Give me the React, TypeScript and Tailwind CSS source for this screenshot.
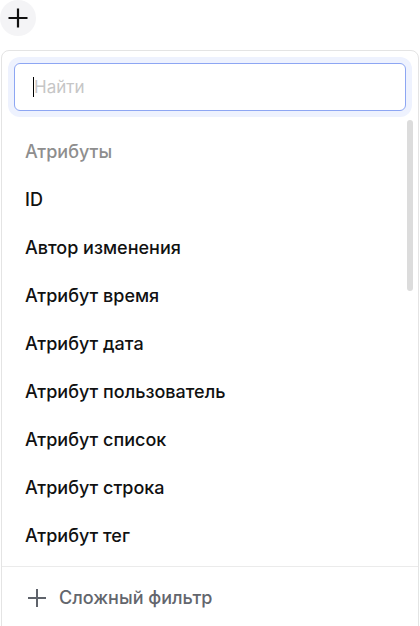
import React from "react";

const items = [
  "ID",
  "Автор изменения",
  "Атрибут время",
  "Атрибут дата",
  "Атрибут пользователь",
  "Атрибут список",
  "Атрибут строка",
  "Атрибут тег",
];

export default function App() {
  return (
    <div
      className="w-[420px] h-[626px] overflow-hidden bg-white"
      style={{ fontFamily: "Inter, 'Noto Sans', sans-serif" }}
    >
      <button className="w-9 h-9 rounded-full bg-[#f4f4f6] flex items-center justify-center">
        <svg width="20" height="20" viewBox="0 0 20 20" fill="none" stroke="#111" strokeWidth="2.2" strokeLinecap="butt">
          <path d="M10 0.5V19.5M0.5 10H19.5" />
        </svg>
      </button>
      <div className="mt-[14px] ml-px w-[418px] h-[600px] border border-[#e4e4e4] rounded-lg flex flex-col relative">
        <div className="pt-3 px-3 pb-[6px]">
          <div className="relative h-12 rounded-md border border-[#8da6f3] shadow-[0_0_0_6px_#eef2fe] bg-white flex items-center">
            <span className="absolute left-[18px] top-[13px] w-px h-5 bg-black" />
            <input
              className="w-full h-full bg-transparent outline-none pl-[19px] text-[17px] placeholder:text-[#c6c6c6] text-[#111]"
              placeholder="Найти"
            />
          </div>
        </div>
        <div className="relative h-[449px] overflow-hidden">
          <div className="pt-[10px]">
            <div className="h-12 flex items-center pl-[23px] text-[18px] font-medium text-[#8e8e8e]">Атрибуты</div>
            {items.map((t) => (
              <div key={t} className="h-12 flex items-center pl-[23px] text-[18px] font-medium text-[#111]">
                {t}
              </div>
            ))}
          </div>
          <div className="absolute right-[5px] top-[3px] w-[6px] h-[171px] rounded-full bg-[#dcdcdc]" />
        </div>
        <div className="border-t border-[#ebebeb] h-[62px] flex items-center pl-[26px] gap-[13px]">
          <svg width="18" height="18" viewBox="0 0 18 18" fill="none" stroke="#5f636b" strokeWidth="2">
            <path d="M9 0V18M0 9H18" />
          </svg>
          <span className="text-[18px] font-medium text-[#63666d]">Сложный фильтр</span>
        </div>
      </div>
    </div>
  );
}
